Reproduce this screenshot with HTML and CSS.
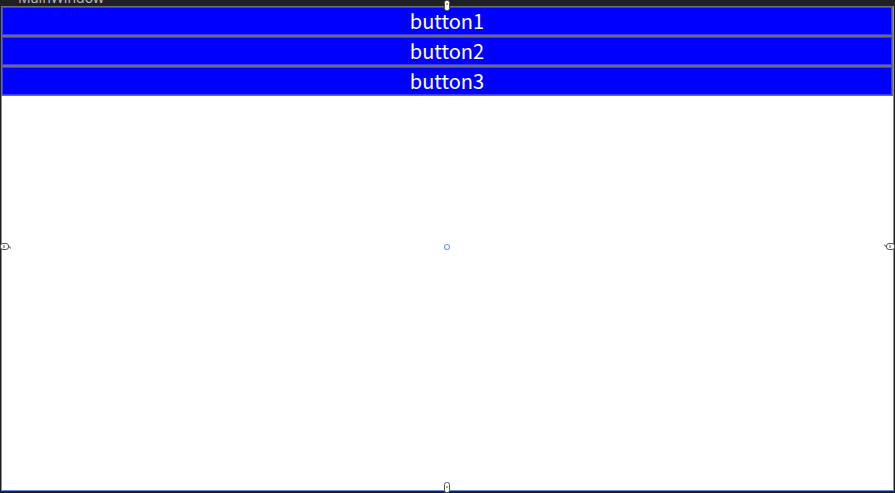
FILE: index.html
```html
<!DOCTYPE html>
<html>
<head>
<meta charset="utf-8">
<link rel="stylesheet" href="styles.css">
</head>
<body>
<div class="window">
  <div class="titlebar"><span class="title">MainWindow</span></div>
  <div class="frame">
    <div class="btn">button1</div>
    <div class="btn">button2</div>
    <div class="btn">button3</div>
    <div class="canvas"></div>
  </div>
  <svg class="handle h-top" width="8" height="12" viewBox="0 0 8 12"><rect x="1.5" y="0.5" width="5" height="10" rx="2" fill="#fff" stroke="#555"/><line x1="3" y1="4" x2="5" y2="4" stroke="#555"/></svg>
  <svg class="handle h-bottom" width="8" height="12" viewBox="0 0 8 12"><rect x="1.5" y="1.5" width="5" height="10" rx="2" fill="#fff" stroke="#555"/><line x1="3" y1="6" x2="5" y2="6" stroke="#555"/></svg>
  <svg class="handle h-left" width="12" height="9" viewBox="0 0 12 9"><rect x="0.5" y="1.5" width="8" height="6" rx="2.5" fill="#fff" stroke="#555"/><path d="M8.5 4.5 q2 0 2 2" fill="none" stroke="#555"/><line x1="4" y1="3" x2="4" y2="6" stroke="#555"/></svg>
  <svg class="handle h-right" width="12" height="9" viewBox="0 0 12 9"><rect x="3.5" y="1.5" width="8" height="6" rx="2.5" fill="#fff" stroke="#555"/><path d="M3.5 4.5 q-2 0 -2 -2" fill="none" stroke="#555"/><line x1="7" y1="3" x2="7" y2="6" stroke="#555"/></svg>
  <svg class="handle h-center" width="8" height="8" viewBox="0 0 8 8"><circle cx="4" cy="4" r="2.5" fill="#fff" stroke="#7d9ee0" stroke-width="1.2"/></svg>
</div>
</body>
</html>
```
FILE: styles.css
```css
html, body {
  margin: 0;
  padding: 0;
  background: #1f2023;
}
.window {
  position: relative;
  width: 895px;
  height: 493px;
  display: flex;
  flex-direction: column;
  overflow: hidden;
}
.titlebar {
  height: 6px;
  overflow: hidden;
  padding-left: 18px;
  flex: none;
}
.title {
  display: block;
  margin-top: -10px;
  font-family: "Noto Sans", "Liberation Sans", sans-serif;
  font-size: 14px;
  line-height: 16px;
  color: #b8b8b8;
}
.frame {
  margin: 0 1px 2px 1px;
  height: 484px;
  flex: none;
  background: #ffffff;
  border: 1px solid #6b8fd6;
  border-top: none;
  display: flex;
  flex-direction: column;
}
.btn {
  height: 28px;
  background: #0000ff;
  border: 1px solid #6e6e72;
  margin-left: -1px;
  color: #ffffff;
  font-family: "Noto Sans CJK SC", "Noto Sans", sans-serif;
  font-size: 20px;
  line-height: 28px;
  text-align: center;
  box-shadow: inset 0 0 0 1px #3a3af0;
}
.canvas {
  flex: 1;
}
.handle {
  position: absolute;
}
.h-top { left: 443px; top: 0; }
.h-bottom { left: 443px; top: 481px; }
.h-left { left: 0; top: 242px; }
.h-right { left: 883px; top: 242px; }
.h-center { left: 443px; top: 243px; }
```
